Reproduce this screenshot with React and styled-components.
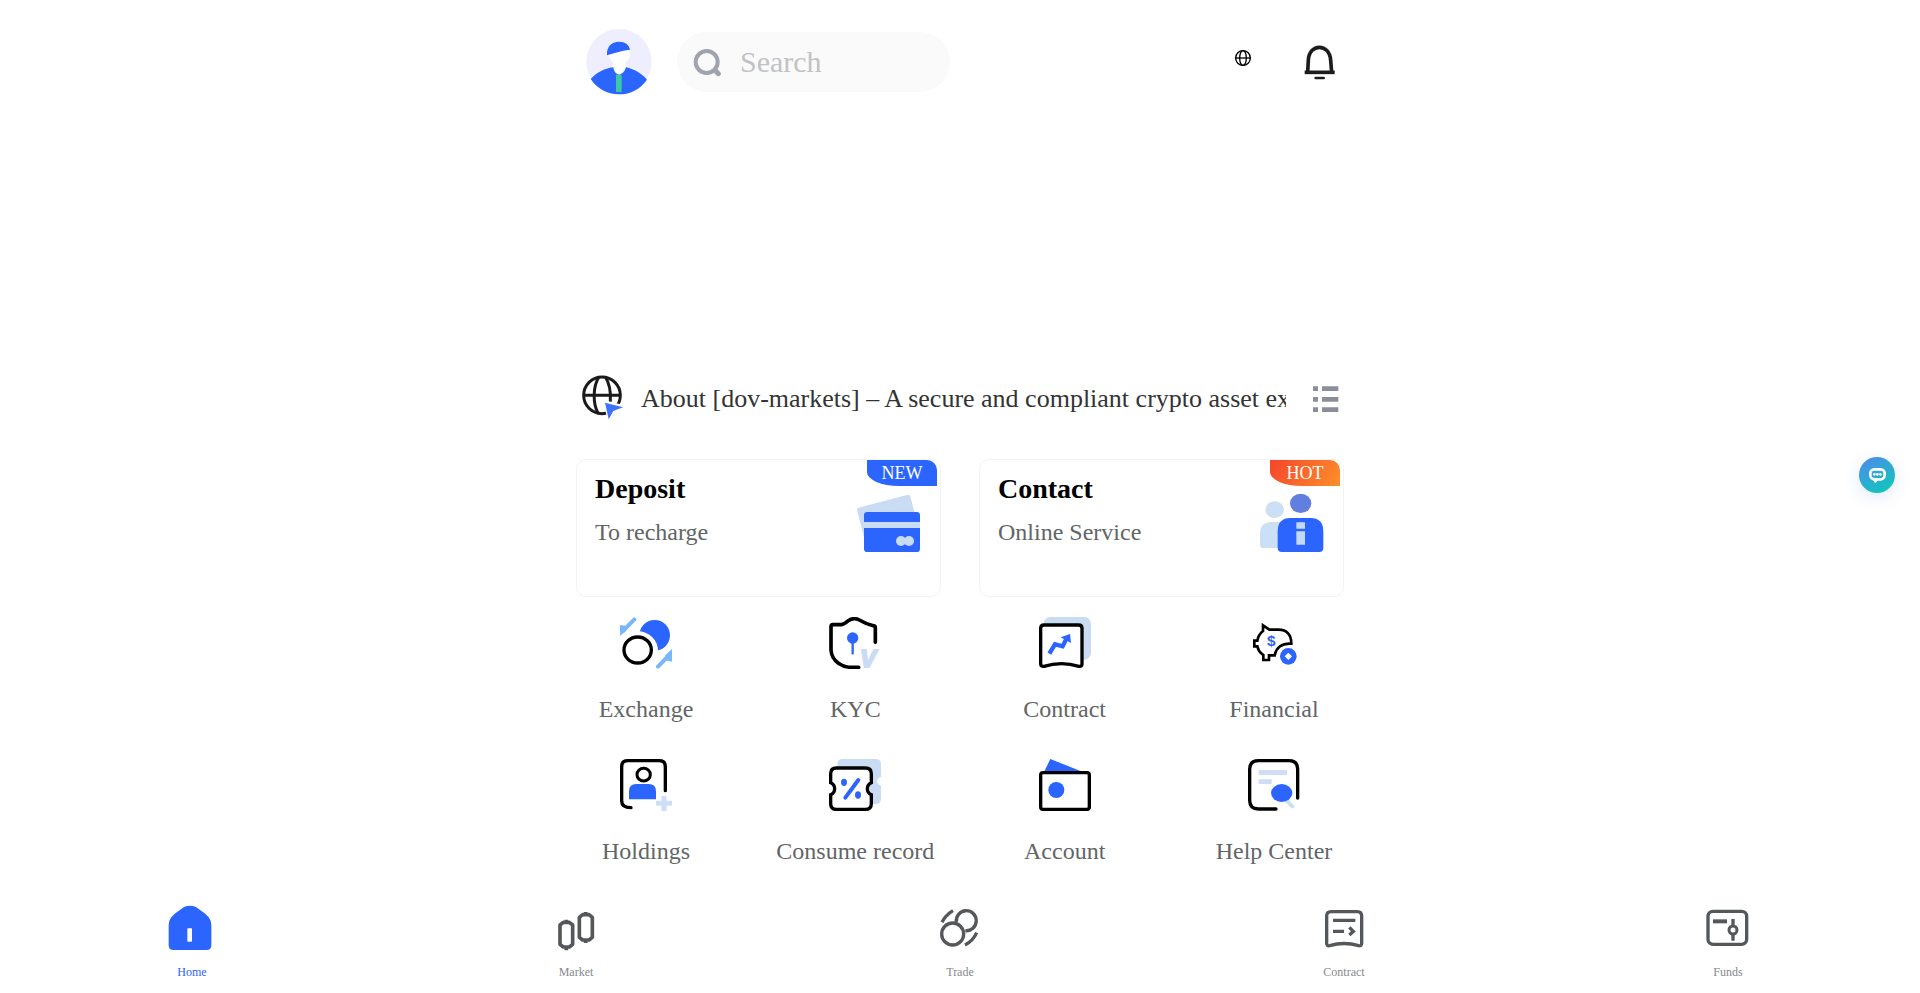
import styled, { createGlobalStyle, css } from "styled-components";

const BLUE = "#2b65fd";
const PALE = "#c9dcf3";
const SKY = "#7bb6fb";
const GREY = "#55585a";

const GlobalStyle = createGlobalStyle`
  * {
    box-sizing: border-box;
  }

  body {
    margin: 0;
    background: #fff;
    color: #000;
    font-family: "Liberation Serif", "Times New Roman", serif;
  }

  h2, p {
    margin: 0;
  }

  a {
    color: inherit;
    text-decoration: none;
  }

  button {
    padding: 0;
    border: 0;
    background: none;
    font: inherit;
    cursor: pointer;
  }

  svg {
    display: block;
  }
`;

const Page = styled.main`
  width: 100%;
  max-width: 768px;
  margin: 0 auto;
  padding-bottom: 112px;
`;

const Header = styled.header`
  display: flex;
  align-items: center;
  padding: 29px 6px 0 10px;
`;

const Avatar = styled.a`
  flex: none;
  margin-right: 25px;
`;

const SearchBox = styled.label`
  display: flex;
  align-items: center;
  gap: 17px;
  width: 273px;
  height: 60px;
  padding: 0 16px;
  border-radius: 30px;
  background: #fafafa;
`;

const SearchInput = styled.input`
  flex: 1;
  min-width: 0;
  padding: 0;
  border: 0;
  outline: none;
  background: none;
  color: #333;
  font: inherit;
  font-size: 30px;

  &::placeholder {
    color: #c0c2c6;
    opacity: 1;
  }
`;

const HeaderActions = styled.div`
  display: flex;
  align-items: flex-start;
  gap: 51px;
  margin-left: auto;
`;

const LanguageButton = styled.button`
  display: flex;
  align-items: center;
  height: 28px;
`;

const Banner = styled.section`
  height: 280px;
`;

const Notice = styled.section`
  display: flex;
  align-items: center;
  gap: 12px;
  height: 48px;
  padding: 0 5px;

  svg {
    flex: none;
  }
`;

const NoticeText = styled.p`
  flex: 1;
  margin-right: 13px;
  overflow: hidden;
  color: #333;
  font-size: 26px;
  line-height: 32px;
  white-space: nowrap;
`;

const Cards = styled.section`
  display: grid;
  grid-template-columns: 1fr 1fr;
  gap: 38px;
  margin-top: 36px;
`;

const Card = styled.a`
  position: relative;
  display: flex;
  justify-content: space-between;
  min-height: 138px;
  padding: 13px 19px 13px 18px;
  border: 1px solid #f3f3f5;
  border-radius: 10px;

  > svg {
    margin-top: 17px;
  }
`;

const CardTitle = styled.h2`
  font-size: 28px;
  line-height: 32px;
`;

const CardText = styled.p`
  margin-top: 13px;
  color: #626566;
  font-size: 24px;
  line-height: 28px;
`;

const Badge = styled.span`
  position: absolute;
  top: 0;
  right: 3px;
  width: 70px;
  height: 26px;
  border-radius: 0 10px 0 32px / 0 10px 0 14px;
  background: ${(props) =>
    props.$hot ? "linear-gradient(120deg, #f5452b, #fd8f2b)" : BLUE};
  color: #fff;
  font-size: 18px;
  line-height: 26px;
  text-align: center;
`;

const Menu = styled.nav`
  display: grid;
  grid-template-columns: repeat(4, 140px);
  justify-content: space-between;
  row-gap: 36px;
  margin-top: 20px;
`;

const MenuItem = styled.a`
  display: flex;
  flex-direction: column;
  align-items: center;
  gap: 26px;
  color: #626566;
  font-size: 24px;
  line-height: 28px;
  white-space: nowrap;
`;

const TabBar = styled.nav`
  position: fixed;
  right: 0;
  bottom: 0;
  left: 0;
  display: flex;
  padding: 8px 0 13px;
  background: #fff;
`;

const Tab = styled.a`
  flex: 1;
  display: flex;
  flex-direction: column;
  align-items: center;
  gap: 12px;
  color: #86898e;
  font-size: 12px;
  line-height: 16px;

  ${(props) =>
    props.$active &&
    css`
      color: ${BLUE};
    `}
`;

const ChatButton = styled.button`
  position: fixed;
  top: 457px;
  right: 25px;
  width: 36px;
  height: 36px;
  border-radius: 50%;
  background: linear-gradient(150deg, #4a8fe8 10%, #10c6bb 90%);
  box-shadow: 0 4px 16px rgba(60, 110, 220, 0.16);
`;

const Icon = ({ size, box, children }) => (
  <svg width={size} height={size} viewBox={box} fill="none" aria-hidden="true">
    {children}
  </svg>
);

const AvatarIcon = () => (
  <Icon size={66} box="79 55 198 198">
    <circle cx="178" cy="153" r="98" fill="#eeeefe" />
    <ellipse cx="179" cy="132" rx="32" ry="27" fill="#fff" />
    <path d="M160 154h37l2 14-21 28-20-28z" fill="#fff" />
    <path d="M142 134C140 108 156 93 178 93c18 0 30 8 33 24-28 4-48 10-69 17z" fill={BLUE} />
    <path
      d="M93 205c18-19 40-31 68-35 1 12 7 20 17 22 11-2 18-10 21-22 26 6 46 18 63 37-20 28-48 44-84 44s-65-17-85-46z"
      fill={BLUE}
    />
    <path d="M169 192h17v52h-17z" fill="#3cc8a2" />
  </Icon>
);

const SearchIcon = () => (
  <Icon size={30} box="398 106 90 90">
    <circle cx="439" cy="151" r="33" stroke="#a0a3ad" strokeWidth="12" />
    <path d="M464 176l10 10" stroke="#a0a3ad" strokeWidth="15" strokeLinecap="round" />
  </Icon>
);

const LanguageIcon = () => (
  <Icon size={16} box="105 90 48 48">
    <g stroke="#000" strokeWidth="4">
      <circle cx="129" cy="114" r="22" />
      <ellipse cx="129" cy="114" rx="10" ry="22" />
      <path d="M107 114h44" />
    </g>
  </Icon>
);

const BellIcon = () => (
  <Icon size={36} box="306 70 108 108">
    <g stroke="#1c1c1c" strokeWidth="11">
      <path d="M323 155l2-36c2-52 64-52 67 0l3 36" />
      <path d="M314 155h90" />
      <path d="M347 172h24" strokeWidth="8" strokeLinecap="round" />
    </g>
  </Icon>
);

const NoticeIcon = () => (
  <Icon size={48} box="33 45 144 144">
    <g stroke="#1a1a1a" strokeWidth="9">
      <circle cx="96" cy="106" r="55" />
      <path d="M39 106h114" />
      <path d="M87 51c-19 28-19 82-2 110M106 51c12 18 17 42 15 74" />
    </g>
    <path d="M98 121l74 16-6 22-26 4-20 30-10-26z" fill="#fff" />
    <path d="M105 128l54 14-29 11-14 25z" fill="#3d74ff" />
  </Icon>
);

const ListIcon = () => (
  <Icon size={28} box="1053 76 84 84">
    <path
      d="M1059 80h15v14h-15zM1086 80h49v14h-49zM1059 112h15v14h-15zM1086 112h49v14h-49zM1059 143h15v14h-15zM1086 143h49v14h-49z"
      fill="#8b8e99"
    />
  </Icon>
);

const DepositIcon = () => (
  <Icon size={64} box="861 390 192 192">
    <path
      d="M867 449l148-39 24 92-148 39z"
      fill={PALE}
      stroke={PALE}
      strokeWidth="12"
      strokeLinejoin="round"
    />
    <rect x="882" y="456" width="168" height="120" rx="10" fill={BLUE} />
    <path d="M882 486h168v18H882z" fill={PALE} />
    <circle cx="993" cy="543" r="15" fill={PALE} />
    <circle cx="1017" cy="543" r="15" fill={PALE} />
  </Icon>
);

const ContactIcon = () => (
  <Icon size={64} box="899 390 192 192">
    <ellipse cx="943" cy="449" rx="28" ry="25" fill="#cbdff5" />
    <path d="M899 522q0-36 34-36h39v78h-61q-12 0-12-10z" fill="#cbdff5" />
    <ellipse cx="1021" cy="430" rx="32" ry="29" fill="#607fdf" />
    <path
      d="M952 515q0-41 38-41h61q38 0 38 41v49q0 12-12 12H964q-12 0-12-12z"
      fill={BLUE}
    />
    <path d="M1008 487h26v19h-26zM1008 514h26v40h-26z" fill="#c3d9f8" />
  </Icon>
);

const ExchangeIcon = () => (
  <Icon size={52} box="150 51 156 156">
    <circle cx="254" cy="106" r="46" fill={BLUE} />
    <ellipse cx="203" cy="152" rx="61" ry="58" fill="#fff" />
    <ellipse cx="203" cy="150" rx="41" ry="39" stroke="#000" strokeWidth="10" />
    <g stroke={SKY} strokeWidth="12" strokeLinecap="round">
      <path d="M193 58l-34 35" />
      <path d="M264 200l34-35" />
    </g>
    <path d="M150 75l22 3-4 14-18 16zM306 147l-20 19-4 14 24 5z" fill={SKY} />
  </Icon>
);

const KycIcon = () => (
  <Icon size={52} box="777 51 156 156">
    <path
      d="M916 127V84q0-6-6-7-24-6-42-17-17-9-33 2-14 12-22 12h-24q-6 0-6 6v70c2 34 34 54 70 52h13"
      stroke="#000"
      strokeWidth="11"
      strokeLinecap="round"
    />
    <circle cx="848" cy="114" r="17" fill={BLUE} />
    <path d="M848 120v43" stroke={BLUE} strokeWidth="7" />
    <text
      x="870"
      y="201"
      fill={PALE}
      stroke={PALE}
      strokeWidth="6"
      fontFamily="Liberation Sans"
      fontSize="72"
      fontStyle="italic"
      fontWeight="700"
    >
      V
    </text>
  </Icon>
);

const ContractIcon = () => (
  <Icon size={52} box="236 51 156 156">
    <rect x="250" y="51" width="142" height="128" rx="20" fill={PALE} />
    <path
      d="M251 75h104q10 0 10 10v107q0 8-9 7-53-16-105 0-10 1-10-7V85q0-10 10-10z"
      fill="#fff"
      stroke="#000"
      strokeWidth="10"
    />
    <path d="M267 161l17-28 23 6 11-22" stroke={BLUE} strokeWidth="13" />
    <path d="M301 112l28-10 3 27z" fill={BLUE} />
  </Icon>
);

const FinancialIcon = () => (
  <Icon size={52} box="864 51 156 156">
    <path
      d="M909 76l19 13h27c26 0 39 16 39 42-28-2-46 12-50 35h-17v14h-17v-15q-14-9-18-26h-9v-17h9q3-18 17-29z"
      stroke="#000"
      strokeWidth="8"
    />
    <text
      x="934"
      y="139"
      fill={BLUE}
      fontFamily="Liberation Sans"
      fontSize="46"
      fontWeight="700"
      textAnchor="middle"
    >
      $
    </text>
    <circle cx="985" cy="169" r="25" fill={BLUE} />
    <path d="M985 158l11 11-11 11-11-11z" fill="#fff" />
  </Icon>
);

const HoldingsIcon = () => (
  <Icon size={52} box="150 57 156 156">
    <path
      d="M286 152V80q0-18-18-18h-95q-18 0-18 18v103q0 20 28 20"
      stroke="#000"
      strokeWidth="10"
      strokeLinecap="round"
    />
    <ellipse cx="221" cy="104" rx="20" ry="19" stroke="#000" strokeWidth="9" />
    <path d="M177 178v-24q0-22 22-22h37q22 0 22 22v24z" fill={BLUE} />
    <path d="M258 190h48M282 168v45" stroke="#cfdef8" strokeWidth="15" />
  </Icon>
);

const RecordIcon = () => (
  <Icon size={52} box="777 57 156 156">
    <path
      d="M818 57h99q16 0 16 16v38q-12 4-12 13t12 13v39q0 16-16 16h-99q-16 0-16-16V73q0-16 16-16z"
      fill={PALE}
    />
    <path
      d="M799 84h87q18 0 18 17v27q-12 5-12 18t12 18v27q0 17-18 17h-87q-17 0-17-17v-27q12-5 12-18t-12-18v-27q0-17 17-17z"
      fill="#fff"
      stroke="#000"
      strokeWidth="10"
    />
    <ellipse cx="822" cy="127" rx="9" ry="11" fill={BLUE} />
    <ellipse cx="864" cy="165" rx="9" ry="11" fill={BLUE} />
    <path d="M865 120l-39 53" stroke={BLUE} strokeWidth="12" strokeLinecap="round" />
  </Icon>
);

const AccountIcon = () => (
  <Icon size={52} box="236 57 156 156">
    <path d="M270 57l98 39-118 2z" fill={BLUE} />
    <rect x="241" y="98" width="146" height="110" rx="7" fill="#fff" stroke="#000" strokeWidth="10" />
    <circle cx="288" cy="150" r="24" fill={BLUE} />
  </Icon>
);

const HelpIcon = () => (
  <Icon size={52} box="864 57 156 156">
    <path
      d="M1013 174V88q0-26-26-26h-92q-26 0-26 26v93q0 26 26 26h53"
      stroke="#000"
      strokeWidth="10"
      strokeLinecap="round"
    />
    <path d="M896 90h85v15h-85zM896 118h39v14h-39z" fill="#cfdef4" />
    <path d="M976 178l21 21" stroke="#c9e0f7" strokeWidth="12" strokeLinecap="round" />
    <ellipse cx="965" cy="159" rx="32" ry="27" fill={BLUE} />
  </Icon>
);

const HomeTabIcon = () => (
  <Icon size={48} box="114 42 144 144">
    <path
      d="M116 108c0-18 6-25 18-37l28-20q18-8 36 0l28 20c12 12 18 19 18 37v58q0 14-14 14H130q-14 0-14-14z"
      fill={BLUE}
    />
    <rect x="172" y="115" width="14" height="40" rx="2" fill="#fff" />
  </Icon>
);

const MarketTabIcon = () => (
  <Icon size={48} box="1266 42 144 144">
    <g stroke={GREY} strokeWidth="11" strokeLinejoin="round">
      <path d="M1300 97h18l10 8v58l-10 8h-18l-10-8v-58zM1309 89v8M1309 171v10" />
      <path d="M1358 74h19l10 8v60l-10 8h-19l-10-8V82zM1367 66v8M1367 150v9" />
    </g>
  </Icon>
);

const TradeTabIcon = () => (
  <Icon size={48} box="108 42 144 144">
    <g stroke={GREY} strokeWidth="10">
      <circle cx="158" cy="132" r="33" />
      <path d="M169 96a30 30 0 1 1 27 26" />
      <path d="M126 97q11-22 33-35M230 128q-11 25-35 37" />
    </g>
  </Icon>
);

const ContractTabIcon = () => (
  <Icon size={48} box="1260 42 144 144">
    <g stroke={GREY} strokeWidth="10">
      <path d="M1293 65h79q13 0 13 13v82q0 9-9 7-44-13-87 0-9 2-9-7V78q0-13 13-13z" />
      <path d="M1299 91h67M1299 124h33" />
      <path d="M1348 112l12 12-12 11" />
    </g>
  </Icon>
);

const FundsTabIcon = () => (
  <Icon size={48} box="132 42 144 144">
    <g stroke={GREY} strokeWidth="10">
      <rect x="144" y="64" width="116" height="99" rx="15" />
      <path d="M159 94h42" strokeWidth="12" />
      <path d="M219 87v20M219 133v19" />
      <circle cx="219" cy="120" r="12" strokeWidth="9" />
    </g>
  </Icon>
);

const ChatIcon = () => (
  <Icon size={36} box="117 81 108 108">
    <rect x="151" y="118" width="43" height="30" rx="12" stroke="#fff" strokeWidth="8" />
    <path d="M160 149h16l-11 11z" fill="#fff" />
    <circle cx="163" cy="133" r="4" fill="#fff" />
    <circle cx="172" cy="133" r="4" fill="#fff" />
    <circle cx="181" cy="133" r="4" fill="#fff" />
  </Icon>
);

const menuItems = [
  { label: "Exchange", icon: ExchangeIcon },
  { label: "KYC", icon: KycIcon },
  { label: "Contract", icon: ContractIcon },
  { label: "Financial", icon: FinancialIcon },
  { label: "Holdings", icon: HoldingsIcon },
  { label: "Consume record", icon: RecordIcon },
  { label: "Account", icon: AccountIcon },
  { label: "Help Center", icon: HelpIcon },
];

const tabs = [
  { label: "Home", icon: HomeTabIcon, active: true },
  { label: "Market", icon: MarketTabIcon },
  { label: "Trade", icon: TradeTabIcon },
  { label: "Contract", icon: ContractTabIcon },
  { label: "Funds", icon: FundsTabIcon },
];

const App = () => {
  return (
    <>
      <GlobalStyle />
      <Page>
        <Header>
          <Avatar href="#" aria-label="Profile">
            <AvatarIcon />
          </Avatar>
          <SearchBox>
            <SearchIcon />
            <SearchInput type="text" placeholder="Search" aria-label="Search" />
          </SearchBox>
          <HeaderActions>
            <LanguageButton aria-label="Language">
              <LanguageIcon />
            </LanguageButton>
            <button aria-label="Notifications">
              <BellIcon />
            </button>
          </HeaderActions>
        </Header>

        <Banner />

        <Notice>
          <NoticeIcon />
          <NoticeText>
            About [dov-markets] – A secure and compliant crypto asset exchange
          </NoticeText>
          <button aria-label="All notices">
            <ListIcon />
          </button>
        </Notice>

        <Cards>
          <Card href="#">
            <div>
              <CardTitle>Deposit</CardTitle>
              <CardText>To recharge</CardText>
            </div>
            <DepositIcon />
            <Badge>NEW</Badge>
          </Card>
          <Card href="#">
            <div>
              <CardTitle>Contact</CardTitle>
              <CardText>Online Service</CardText>
            </div>
            <ContactIcon />
            <Badge $hot>HOT</Badge>
          </Card>
        </Cards>

        <Menu>
          {menuItems.map(({ label, icon: ItemIcon }) => (
            <MenuItem key={label} href="#">
              <ItemIcon />
              <span>{label}</span>
            </MenuItem>
          ))}
        </Menu>
      </Page>

      <TabBar>
        {tabs.map(({ label, icon: TabIcon, active }) => (
          <Tab key={label} href="#" $active={active}>
            <TabIcon />
            <span>{label}</span>
          </Tab>
        ))}
      </TabBar>

      <ChatButton aria-label="Chat">
        <ChatIcon />
      </ChatButton>
    </>
  );
};

export default App;
